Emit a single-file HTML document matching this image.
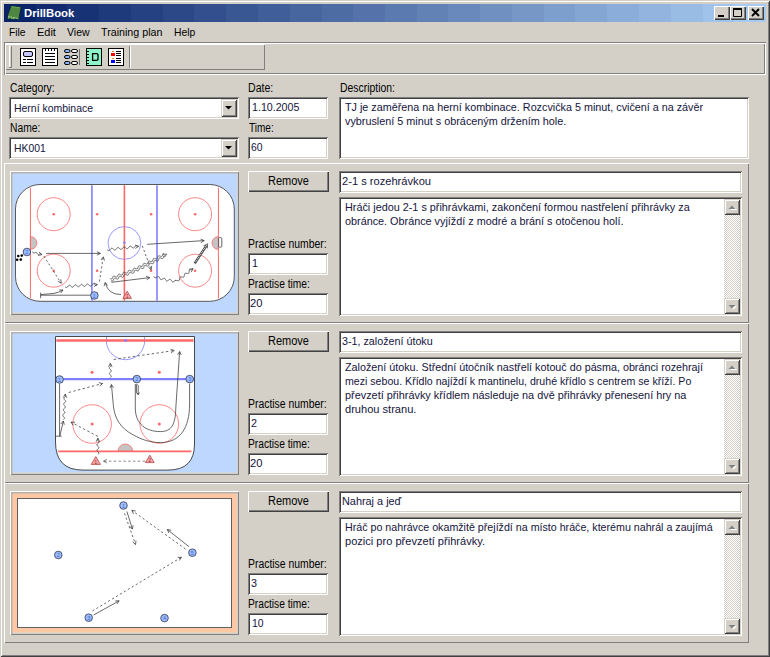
<!DOCTYPE html>
<html><head><meta charset="utf-8"><title>DrillBook</title>
<style>
*{box-sizing:border-box;margin:0;padding:0}
html,body{width:770px;height:657px;overflow:hidden;background:#D4D0C8}
body{font-family:"Liberation Sans",sans-serif;font-size:11px;color:#000;position:relative}
.abs{position:absolute}
#win{position:absolute;left:0;top:0;width:770px;height:657px;background:#D4D0C8;
 box-shadow:inset 1px 1px 0 #D4D0C8, inset -1px -1px 0 #404040, inset 2px 2px 0 #fff, inset -2px -2px 0 #808080}
#title{left:4px;top:4px;width:762px;height:18px;background:linear-gradient(to right,#0a246a 0.00%, #0a246a 4.17%,#112b70 4.17%, #112b70 8.33%,#183276 8.33%, #183276 12.50%,#1e3a7b 12.50%, #1e3a7b 16.67%,#254181 16.67%, #254181 20.83%,#2c4887 20.83%, #2c4887 25.00%,#334f8d 25.00%, #334f8d 29.17%,#395793 29.17%, #395793 33.33%,#405e99 33.33%, #405e99 37.50%,#47659e 37.50%, #47659e 41.67%,#4e6ca4 41.67%, #4e6ca4 45.83%,#5573aa 45.83%, #5573aa 50.00%,#5b7bb0 50.00%, #5b7bb0 54.17%,#6282b6 54.17%, #6282b6 58.33%,#6989bc 58.33%, #6989bc 62.50%,#7090c1 62.50%, #7090c1 66.67%,#7797c7 66.67%, #7797c7 70.83%,#7d9fcd 70.83%, #7d9fcd 75.00%,#84a6d3 75.00%, #84a6d3 79.17%,#8badd9 79.17%, #8badd9 83.33%,#92b4df 83.33%, #92b4df 87.50%,#98bce4 87.50%, #98bce4 91.67%,#9fc3ea 91.67%, #9fc3ea 95.83%,#a6caf0 95.83%, #a6caf0 100.00%)}
.tb{position:absolute;top:2px;width:16px;height:14px;background:#D4D0C8;box-shadow:inset 1px 1px 0 #fff, inset -1px -1px 0 #404040, inset -2px -2px 0 #808080}
.tx{position:absolute;white-space:nowrap;transform-origin:0 0;font-size:11px}
.in{color:#14143c}
.lbl{font-size:12px}
.mn{font-size:11.5px}
.sunk{position:absolute;background:#fff;box-shadow:inset 1px 1px 0 #808080, inset -1px -1px 0 #fff, inset 2px 2px 0 #404040, inset -2px -2px 0 #D4D0C8}
.btn{position:absolute;background:#D4D0C8;box-shadow:inset 1px 1px 0 #fff, inset -1px -1px 0 #404040, inset -2px -2px 0 #808080}
.panel{position:absolute;left:4px;width:745px;height:160px;box-shadow:inset 1px 1px 0 #fff, inset -1px -1px 0 #808080}
.imgf{position:absolute;left:6px;top:8px;width:229px;height:144px;box-shadow:inset 1px 1px 0 #fff, inset -1px -1px 0 #808080, inset 2px 2px 0 #b4b0a8, inset -2px -2px 0 #D4D0C8}
.imgf svg{position:absolute;left:2px;top:2px}
.sb{position:absolute;right:2px;top:2px;bottom:2px;width:16px;background-color:#fff;
 background-image:linear-gradient(45deg,#D4D0C8 25%,transparent 25%,transparent 75%,#D4D0C8 75%),linear-gradient(45deg,#D4D0C8 25%,transparent 25%,transparent 75%,#D4D0C8 75%);background-size:2px 2px;background-position:0 0,1px 1px}
.sb .b{position:absolute;left:0;width:16px;height:16px;background:#D4D0C8;box-shadow:inset 1px 1px 0 #D4D0C8, inset -1px -1px 0 #404040, inset 2px 2px 0 #fff, inset -2px -2px 0 #808080}
.cb{position:absolute;right:2px;top:2px;width:16px;height:18px;background:#D4D0C8;box-shadow:inset 1px 1px 0 #D4D0C8, inset -1px -1px 0 #404040, inset 2px 2px 0 #fff, inset -2px -2px 0 #808080}
</style></head><body>
<div id="win">
<div id="title" class="abs"><div class="tb" style="left:710px"><svg width="16" height="14" style="position:absolute;left:0;top:0"><rect x="4" y="9" width="6" height="2" fill="#000"/></svg></div><div class="tb" style="left:726px"><svg width="16" height="14" style="position:absolute;left:0;top:0"><path d="M3.5 3v7.5h8V3z M3.5 3.5h8" fill="none" stroke="#000" stroke-width="1"/><rect x="3" y="2" width="9" height="2" fill="#000"/></svg></div><div class="tb" style="left:744px"><svg width="16" height="14" style="position:absolute;left:0;top:0"><path d="M4 3l7 7M11 3l-7 7" stroke="#000" stroke-width="1.9" fill="none"/></svg></div></div>
<svg class="abs" style="left:4px;top:4px" width="20" height="18" viewBox="4 4 20 18"><path d="M11 5.8L21.2 7L18.7 19.9L15.8 18.6L13 19.7L10 18.4L7.3 19.3L7.5 15.6z" fill="#4f8642" stroke="#0a1a3a" stroke-width="0.8"/><path d="M8 16.6L12.5 17.2L18 18.6" stroke="#d8e8d0" stroke-width="0.7" fill="none" stroke-dasharray="1.5 1"/><path d="M7.8 18.2L10 17.6L13 18.8L15.8 17.8L18.4 19" stroke="#6fbf5a" stroke-width="1" fill="none"/><path d="M11.3 6.6L20 7.7" stroke="#66b356" stroke-width="0.8"/></svg>
<div class="tx ttl" style="left:24.0px;top:6.899999999999999px;line-height:13px;transform:scaleX(0.9839);color:#fff;font-weight:bold;font-size:11.5px;">DrillBook</div>
<div class="tx mn" style="left:9.0px;top:25.799999999999997px;line-height:13px;transform:scaleX(0.8958);">File</div>
<div class="tx mn" style="left:37.0px;top:25.799999999999997px;line-height:13px;transform:scaleX(0.9532);">Edit</div>
<div class="tx mn" style="left:67.1px;top:25.799999999999997px;line-height:13px;transform:scaleX(0.9143);">View</div>
<div class="tx mn" style="left:101.1px;top:25.799999999999997px;line-height:13px;transform:scaleX(0.9309);">Training plan</div>
<div class="tx mn" style="left:173.8px;top:25.799999999999997px;line-height:13px;transform:scaleX(0.9004);">Help</div>
<div class="abs" style="left:4px;top:42px;width:762px;height:33px;box-shadow:inset 1px 1px 0 #808080, inset -1px -1px 0 #fff, inset 2px 2px 0 #fff, inset -2px -2px 0 #808080"></div>
<div class="abs" id="toolbar" style="left:5px;top:44px;width:260px;height:26px;box-shadow:inset 1px 1px 0 #fff, inset -1px -1px 0 #808080"><svg width="260" height="26" viewBox="5 44 260 26" style="position:absolute;left:0;top:0" shape-rendering="crispEdges">
<!-- gripper -->
<rect x="9" y="46" width="1" height="22" fill="#fff"/><rect x="10" y="46" width="1" height="1" fill="#fff"/><rect x="11" y="46" width="1" height="22" fill="#808080"/><rect x="9" y="67" width="3" height="1" fill="#808080"/>
<!-- icon1 -->
<rect x="20.5" y="48.5" width="15" height="17" fill="#fff" stroke="#000"/>
<rect x="23.5" y="51.5" width="9" height="5" rx="1.5" fill="#c8c8ff" stroke="#000" shape-rendering="auto"/>
<rect x="23" y="59" width="3" height="1" fill="#000"/><rect x="27" y="59" width="6" height="1" fill="#000"/>
<rect x="23" y="62" width="3" height="1" fill="#000"/><rect x="27" y="62" width="6" height="1" fill="#000"/>
<!-- icon2 -->
<rect x="42.5" y="48.5" width="15" height="17" fill="#fff" stroke="#000"/>
<rect x="45" y="48" width="1" height="3" fill="#000"/><rect x="48" y="48" width="1" height="3" fill="#000"/><rect x="51" y="48" width="1" height="3" fill="#000"/><rect x="54" y="48" width="1" height="3" fill="#000"/>
<rect x="45" y="53" width="10" height="1" fill="#000"/><rect x="45" y="56" width="10" height="1" fill="#000"/><rect x="45" y="59" width="10" height="1" fill="#000"/><rect x="45" y="62" width="10" height="1" fill="#000"/>
<!-- icon3 -->
<g shape-rendering="auto" stroke="#000" stroke-width="1">
<rect x="64.5" y="49.5" width="5.5" height="3" rx="1.5" fill="#8cb4ff"/><rect x="71.5" y="49.5" width="6" height="3" rx="1.5" fill="#fff"/>
<rect x="64.5" y="55.5" width="5.5" height="3" rx="1.5" fill="#8cb4ff"/><rect x="71.5" y="55.5" width="6" height="3" rx="1.5" fill="#fff"/>
<rect x="64.5" y="61.5" width="5.5" height="3" rx="1.5" fill="#8cb4ff"/><rect x="71.5" y="61.5" width="6" height="3" rx="1.5" fill="#fff"/>
</g>
<rect x="79" y="49" width="1" height="16" fill="#707070"/>
<!-- icon4 -->
<rect x="86.5" y="48.5" width="15" height="17" fill="#8ef5cb" stroke="#000"/>
<rect x="101" y="48" width="1" height="18" fill="#000"/><rect x="86" y="65" width="16" height="1" fill="#000"/>
<rect x="86" y="51" width="3" height="1" fill="#000"/><rect x="86" y="54" width="3" height="1" fill="#000"/><rect x="86" y="57" width="3" height="1" fill="#000"/><rect x="86" y="60" width="3" height="1" fill="#000"/><rect x="86" y="63" width="3" height="1" fill="#000"/>
<path d="M92.6 53.6h4.4l1 1v4.8l-1 1h-4.4z" fill="none" stroke="#000" stroke-width="1.3" shape-rendering="auto"/>
<!-- icon5 -->
<rect x="108.5" y="48.5" width="15" height="17" fill="#fff" stroke="#000"/>
<rect x="112" y="51" width="2" height="1" fill="#e08020"/><rect x="111" y="53" width="4" height="3" fill="#f00"/>
<rect x="112" y="58" width="2" height="1" fill="#e08020"/><rect x="111" y="60" width="4" height="3" fill="#00f"/>
<rect x="116" y="51" width="5" height="1" fill="#000"/><rect x="116" y="53" width="5" height="1" fill="#000"/><rect x="116" y="55" width="5" height="1" fill="#000"/>
<rect x="116" y="58" width="5" height="1" fill="#000"/><rect x="116" y="60" width="5" height="1" fill="#000"/><rect x="116" y="62" width="5" height="1" fill="#000"/>
<!-- separator -->
<rect x="129" y="46" width="1" height="22" fill="#808080"/><rect x="130" y="46" width="1" height="22" fill="#fff"/>
</svg>
</div>
<div class="tx lbl" style="left:10.0px;top:81.8px;line-height:13px;transform:scaleX(0.8572);">Category:</div>
<div class="sunk" style="left:9px;top:97px;width:230px;height:22px"><div class="cb"><svg width="16" height="18" style="position:absolute;left:0;top:0"><path d="M4 7h7L7.5 10.5z" fill="#000"/></svg></div></div>
<div class="tx in" style="left:13.7px;top:101.6px;line-height:13px;transform:scaleX(0.9500);">Herní kombinace</div>
<div class="tx lbl" style="left:10.0px;top:121.80000000000001px;line-height:13px;transform:scaleX(0.8573);">Name:</div>
<div class="sunk" style="left:9px;top:137px;width:230px;height:22px"><div class="cb"><svg width="16" height="18" style="position:absolute;left:0;top:0"><path d="M4 7h7L7.5 10.5z" fill="#000"/></svg></div></div>
<div class="tx in" style="left:13.6px;top:141.6px;line-height:13px;transform:scaleX(0.9423);">HK001</div>
<div class="tx lbl" style="left:248.1px;top:81.8px;line-height:13px;transform:scaleX(0.8819);">Date:</div>
<div class="sunk" style="left:248px;top:97px;width:80px;height:22px"></div>
<div class="tx in" style="left:251.6px;top:100.6px;line-height:13px;transform:scaleX(0.9686);">1.10.2005</div>
<div class="tx lbl" style="left:248.7px;top:121.80000000000001px;line-height:13px;transform:scaleX(0.8355);">Time:</div>
<div class="sunk" style="left:248px;top:137px;width:80px;height:22px"></div>
<div class="tx in" style="left:250.8px;top:140.6px;line-height:13px;transform:scaleX(0.9388);">60</div>
<div class="tx lbl" style="left:339.6px;top:81.8px;line-height:13px;transform:scaleX(0.8681);">Description:</div>
<div class="sunk" style="left:339px;top:97px;width:410px;height:62px"></div>
<div class="tx in" style="left:344.6px;top:101.4px;line-height:13px;transform:scaleX(0.9794);">TJ je zaměřena na herní kombinace. Rozcvička 5 minut, cvičení a na závěr</div>
<div class="tx in" style="left:344.6px;top:115.4px;line-height:13px;transform:scaleX(0.9836);">vybruslení 5 minut s obráceným držením hole.</div>
<div class="panel" style="top:163px"><div class="imgf"><svg width="225" height="140" viewBox="12 173 225 140"><rect x="12" y="173" width="225" height="140" fill="#b8b4ac"/><rect x="13" y="174" width="224" height="139" fill="#dad7d0"/><rect x="12.5" y="173.5" width="224.2" height="138.9" fill="#bdd7ff"/><rect x="15.5" y="184.5" width="218.8" height="116.8" rx="24.5" fill="#fff" stroke="#585858" stroke-width="1"/><circle cx="53.7" cy="214.2" r="16.5" fill="none" stroke="#ff6868" stroke-width="0.8"/><circle cx="53.7" cy="214.2" r="1.3" fill="#ff6868"/><circle cx="53.7" cy="270.7" r="16.5" fill="none" stroke="#ff6868" stroke-width="0.8"/><circle cx="53.7" cy="270.7" r="1.3" fill="#ff6868"/><circle cx="195.1" cy="214.2" r="16.5" fill="none" stroke="#ff6868" stroke-width="0.8"/><circle cx="195.1" cy="214.2" r="1.3" fill="#ff6868"/><circle cx="195.1" cy="270.7" r="16.5" fill="none" stroke="#ff6868" stroke-width="0.8"/><circle cx="195.1" cy="270.7" r="1.3" fill="#ff6868"/><circle cx="97.1" cy="214.2" r="1.3" fill="#ff6868"/><circle cx="97.1" cy="270.7" r="1.3" fill="#ff6868"/><circle cx="151.1" cy="214.2" r="1.3" fill="#ff6868"/><circle cx="151.1" cy="270.7" r="1.3" fill="#ff6868"/><circle cx="124.4" cy="243" r="16.4" fill="none" stroke="#8080ff" stroke-width="0.8"/><path d="M30.4 236.6A6.4 6.4 0 0 1 30.4 249.4z" fill="#c4c4c4" stroke="#ff6868" stroke-width="0.8"/><path d="M218.4 236.6A6.4 6.4 0 0 0 218.4 249.4z" fill="#c4c4c4" stroke="#ff6868" stroke-width="0.8"/><path d="M30.4 187.6V298.4M218.4 187.6V298.4" stroke="#ff6868" stroke-width="1"/><path d="M91.9 185.2V300.8M157 185.2V300.8" stroke="#8080ff" stroke-width="1.6"/><path d="M124.4 185.2V300.8" stroke="#ff6868" stroke-width="1.6"/><circle cx="124.4" cy="242.8" r="1.2" fill="#8080ff"/><rect x="218.6" y="237.6" width="3.2" height="9.6" rx="1" fill="#fff" stroke="#404040" stroke-width="0.8"/><circle cx="18.3" cy="256" r="1.3" fill="#000"/><circle cx="21.8" cy="255.6" r="1.3" fill="#000"/><circle cx="17.2" cy="259.8" r="1.3" fill="#000"/><circle cx="20.8" cy="259.6" r="1.3" fill="#000"/><circle cx="26.9" cy="252" r="3.8" fill="#9cbcff" stroke="#303850" stroke-width="0.8"/><text x="26.9" y="254" font-size="5.5" text-anchor="middle" fill="#4468c0" font-family="Liberation Sans, sans-serif">2</text><path d="M32.6 251.6L32.76 252.03L32.95 252.42L33.17 252.71L33.46 252.88L33.8 252.94L34.19 252.88L34.62 252.75L35.05 252.6L35.48 252.46L35.88 252.39L36.23 252.43L36.38 252.5L36.67 252.72L36.93 253.05L37.18 253.43L37.43 253.83L37.69 254.17L37.97 254.42L38.28 254.55L38.62 254.55L38.99 254.42L39.38 254.19L39.76 254L40.13 253.88L40.47 253.87L40.79 253.96L41.09 254.12L41.39 254.31L41.69 254.48L42 254.6" fill="none" stroke="#383838" stroke-width="0.75"/><path d="M39.02 252.09L42 254.6L38.21 255.53" fill="none" stroke="#383838" stroke-width="0.75"/><path d="M46.2 253.4L100.4 253.4" fill="none" stroke="#383838" stroke-width="0.75"/><path d="M96.93 251.63L100.4 253.4L96.93 255.17" fill="none" stroke="#383838" stroke-width="0.75"/><path d="M43.9 256.2L61.2 283.2" fill="none" stroke="#383838" stroke-width="0.75" stroke-dasharray="2.2 2.2"/><path d="M60.82 279.32L61.2 283.2L57.83 281.23" fill="none" stroke="#383838" stroke-width="0.75"/><path d="M65 286.6L65.54 287.12L66.08 287.49L66.59 287.6L67.09 287.4L67.56 286.94L68.03 286.35L68.5 285.77L68.98 285.35L69.48 285.2L70 285.36L70.54 285.76L71.08 286.29L71.62 286.8L72.15 287.13L72.66 287.18L73.16 286.94L73.63 286.45L74.1 285.84L74.57 285.28L75.05 284.9L75.56 284.81L76.08 285.01L76.62 285.45L77.16 285.99L77.7 286.47L78.23 286.76L78.74 286.76L79.22 286.47L79.7 285.95L80.17 285.34L80.65 284.81L81.14 284.48L81.64 284.44L82.16 284.69L82.7 285.16L83.24 285.71L83.77 286.18L84.3 286.42L84.8 286.38L85.29 286.04L85.77 285.5L86.24 284.9L86.72 284.39L87.21 284.1L87.72 284.12L88.24 284.42L88.78 284.91L89.32 285.46L89.85 285.89L90.37 286.09L90.88 286L91.36 285.62L91.84 285.05L92.31 284.46L92.79 283.98L93.29 283.74L93.8 283.81L94.33 284.15L94.86 284.67L95.39 285.04L95.91 285.15L96.41 285.03L96.9 284.79L97.4 284.6" fill="none" stroke="#383838" stroke-width="0.75"/><path d="M93.83 283.03L97.4 284.6L94.03 286.57" fill="none" stroke="#383838" stroke-width="0.75"/><path d="M40.6 292.6V298.2M40.6 295.2H90.6" stroke="#383838" stroke-width="0.75" fill="none"/><path d="M41 294.6L54 293.4Q58 292.8 63 290" stroke="#383838" stroke-width="0.75" fill="none"/><path d="M59.1 289.97L63 290L60.68 293.14" fill="none" stroke="#383838" stroke-width="0.75"/><circle cx="94.4" cy="295.5" r="3.8" fill="#9cbcff" stroke="#303850" stroke-width="0.8"/><text x="94.4" y="297.5" font-size="5.5" text-anchor="middle" fill="#4468c0" font-family="Liberation Sans, sans-serif">1</text><path d="M99.4 281.6L103.3 256.8" fill="none" stroke="#383838" stroke-width="0.75" stroke-dasharray="2.2 2.2"/><path d="M101.01 259.96L103.3 256.8L104.51 260.51" fill="none" stroke="#383838" stroke-width="0.75"/><path d="M121 294.6Q108 294.5 105.4 283" stroke="#383838" stroke-width="0.75" fill="none"/><path d="M104.05 286.13L105.2 282.4L107.54 285.52" fill="none" stroke="#383838" stroke-width="0.75"/><path d="M122.9 298.4L131.5 298.4L127.2 291.2z" fill="#f4a8a8" stroke="#a83030" stroke-width="0.7"/><text x="127.2" y="297.6" font-size="4.5" text-anchor="middle" fill="#a02020" font-family="Liberation Sans, sans-serif">1</text><path d="M107.2 249.8L107.76 250.28L108.3 250.62L108.81 250.73L109.3 250.56L109.76 250.15L110.2 249.58L110.64 248.98L111.09 248.5L111.57 248.23L112.08 248.24L112.61 248.51L113.16 248.95L113.72 249.45L114.27 249.85L114.79 250.06L115.29 249.99L115.76 249.66L116.21 249.13L116.65 248.52L117.09 247.98L117.56 247.63L118.05 247.54L118.58 247.72L119.12 248.11L119.68 248.6L120.23 249.06L120.77 249.35L121.28 249.38L121.76 249.14L122.21 248.67L122.65 248.07L123.09 247.49L123.54 247.06L124.03 246.86L124.54 246.94L125.08 247.27L125.64 247.73L126.2 248.21L126.75 248.57L127.26 248.7L127.75 248.55L128.21 248.16L128.65 247.59L129.09 246.99L129.54 246.48L130.01 246.19L130.51 246.18L131.04 246.42L131.6 246.85L132.16 247.34L132.71 247.76L133.24 247.98L133.74 247.93L134.21 247.62L134.65 247.1L135.09 246.5L135.53 245.94L136.01 245.73L136.52 245.8L137.06 246.03L137.59 246.27L138.1 246.37L138.6 246.3" fill="none" stroke="#383838" stroke-width="0.75"/><path d="M134.95 244.94L138.6 246.3L135.35 248.45" fill="none" stroke="#383838" stroke-width="0.75"/><path d="M142.3 245.8L151.2 269.8" fill="none" stroke="#383838" stroke-width="0.75" stroke-dasharray="2.2 2.2"/><path d="M151.65 265.93L151.2 269.8L148.33 267.16" fill="none" stroke="#383838" stroke-width="0.75"/><path d="M147.1 244.3L204.2 240.6" fill="none" stroke="#383838" stroke-width="0.75"/><path d="M200.62 239.06L204.2 240.6L200.85 242.59" fill="none" stroke="#383838" stroke-width="0.75"/><path d="M110.97 280.65L111.64 280.98L112.24 281.14L112.73 281.03L113.12 280.63L113.42 280L113.68 279.3L113.98 278.68L114.37 278.29L114.87 278.19L115.48 278.37L116.14 278.7L116.8 279.02L117.4 279.18L117.89 279.06L118.27 278.64L118.56 278.01L118.83 277.3L119.14 276.69L119.53 276.31L120.04 276.23L120.64 276.41L121.31 276.75L121.97 277.07L122.56 277.21L123.05 277.08L123.42 276.65L123.71 276.01L123.98 275.3L124.29 274.7L124.69 274.33L125.2 274.27L125.81 274.46L126.48 274.8L127.13 275.11L127.72 275.25L128.2 275.1L128.57 274.66L128.86 274.01L129.13 273.31L129.44 272.71L129.84 272.36L130.36 272.31L130.98 272.51L131.64 272.85L132.3 273.16L132.88 273.28L133.36 273.12L133.72 272.67L134.01 272.01L134.23 271.28L134.49 270.67L134.87 270.3L135.39 270.22L136.02 270.38L136.72 270.66L137.4 270.91L137.98 270.97L138.44 270.75L138.76 270.26L138.98 269.58L139.19 268.85L139.46 268.25L139.84 267.89L140.36 267.82L141 267.99L141.7 268.28L142.38 268.52L142.96 268.56L143.4 268.34L143.72 267.83L143.94 267.14L144.15 266.42L144.42 265.83L144.81 265.48L145.34 265.42L145.98 265.6L146.68 265.89L147.35 266.12L147.93 266.16L148.37 265.92L148.68 265.4L148.9 264.71L149.11 263.99L149.39 263.41L149.78 263.07L150.29 263.03L150.94 263.2L151.65 263.46L152.33 263.67L152.9 263.67L153.32 263.4L153.61 262.87L153.8 262.16L153.99 261.44L154.25 260.86L154.64 260.52L155.18 260.47L155.84 260.64L156.55 260.91L157.22 261.11L157.78 261.1L158.2 260.82L158.48 260.27L158.68 259.56L158.86 258.84L159.13 258.27L159.53 257.95L160.07 257.91L160.73 258.09L161.44 258.35L162.11 258.54L162.67 258.53L163.08 258.23L163.36 257.67L163.55 256.96L163.74 256.25L164.01 255.68L164.87 256.25" fill="none" stroke="#303030" stroke-width="0.7"/><path d="M110.03 278.55L110.69 278.88L111.29 279.04L111.79 278.94L112.17 278.53L112.47 277.91L112.73 277.2L113.03 276.58L113.42 276.19L113.92 276.1L114.53 276.27L115.19 276.6L115.85 276.93L116.45 277.08L116.94 276.96L117.32 276.54L117.62 275.91L117.88 275.2L118.19 274.59L118.58 274.21L119.09 274.13L119.7 274.32L120.36 274.65L121.02 274.97L121.61 275.12L122.1 274.98L122.47 274.55L122.77 273.91L123.03 273.21L123.34 272.6L123.74 272.24L124.25 272.17L124.86 272.37L125.53 272.7L126.19 273.02L126.77 273.15L127.26 273L127.62 272.56L127.91 271.92L128.18 271.21L128.49 270.61L128.89 270.26L129.41 270.21L130.03 270.42L130.7 270.76L131.35 271.06L131.94 271.19L132.41 271.02L132.78 270.57L133.06 269.92L133.28 269.19L133.55 268.58L133.92 268.21L134.44 268.12L135.08 268.28L135.77 268.57L136.45 268.81L137.04 268.87L137.49 268.66L137.81 268.16L138.04 267.48L138.24 266.76L138.51 266.16L138.89 265.8L139.42 265.72L140.06 265.89L140.75 266.18L141.43 266.42L142.01 266.47L142.46 266.24L142.77 265.74L142.99 265.05L143.2 264.33L143.47 263.73L143.86 263.39L144.39 263.33L145.04 263.51L145.73 263.79L146.41 264.03L146.98 264.07L147.42 263.82L147.73 263.31L147.95 262.62L148.16 261.9L148.44 261.31L148.83 260.98L149.34 260.94L149.99 261.1L150.7 261.37L151.38 261.57L151.95 261.58L152.37 261.31L152.66 260.77L152.85 260.07L153.04 259.35L153.3 258.76L153.69 258.43L154.23 258.37L154.89 258.55L155.6 258.81L156.27 259.01L156.84 259.01L157.25 258.72L157.53 258.18L157.73 257.47L157.92 256.75L158.18 256.17L158.58 255.85L159.12 255.81L159.79 255.99L160.49 256.26L161.16 256.45L161.72 256.43L162.13 256.13L162.41 255.58L162.6 254.87L162.79 254.15L163.06 253.58L163.93 254.15" fill="none" stroke="#303030" stroke-width="0.7"/><path d="M162.78 254.19L166.68 254.17L164.41 257.34" fill="none" stroke="#303030" stroke-width="0.7"/><path d="M111.4 282.3L149.8 277.6" fill="none" stroke="#383838" stroke-width="0.75"/><path d="M146.14 276.26L149.8 277.6L146.57 279.78" fill="none" stroke="#383838" stroke-width="0.75"/><path d="M154 276.4L154.33 277.07L154.7 277.6L155.15 277.88L155.67 277.87L156.27 277.61L156.91 277.22L157.55 276.83L158.15 276.59L158.67 276.61L159.1 276.92L159.47 277.47L159.79 278.15L160.13 278.81L160.51 279.32L160.96 279.57L161.5 279.53L162.1 279.25L162.74 278.85L163.38 278.47L163.97 278.26L164.48 278.31L164.9 278.64L165.22 279.18L165.62 279.82L166.03 280.43L166.47 280.87L166.96 281.03L167.49 280.89L168.06 280.52L168.65 280.04L169.24 279.6L169.79 279.35L170.3 279.37L170.76 279.68L171.18 280.22L171.59 280.86L172 281.46L172.44 281.87L172.93 281.99L173.47 281.83L174.05 281.45L174.64 280.96L175.22 280.54L175.77 280.3L175.44 280.48L176 280.39L176.69 280.48L177.44 280.64L178.15 280.75L178.73 280.69L179.15 280.41L179.39 279.89L179.5 279.19L179.57 278.43L179.68 277.73L179.91 277.2L180.32 276.9L180.9 276.83L181.6 276.93L182.34 277.09L183.04 277.19L183.61 277.11L184.01 276.8L184.24 276.26L184.34 275.55L184.39 274.78L184.5 274.09L184.74 273.58L185.16 273.3L185.75 273.24L186.46 273.34L187.21 273.49L187.9 273.56L188.45 273.45L188.83 273.1L189.03 272.54L189.11 271.82L189.16 271.05L189.28 270.38L189.54 269.89L189.98 269.63L190.65 269.68L191.34 269.75L191.93 269.69L192.38 269.45L192.71 269.05L193 268.6" fill="none" stroke="#383838" stroke-width="0.75"/><path d="M189.17 269.31L193 268.6L191.32 272.12" fill="none" stroke="#383838" stroke-width="0.75"/><path d="M194.6 263.7L206.4 245.6" stroke="#383838" stroke-width="2.4"/><path d="M194.6 263.7L206.4 245.6" stroke="#fff" stroke-width="1.1" stroke-dasharray="0.9 0.9"/><path d="M203.5 245.88L207.6 243.8L207.35 248.39" fill="none" stroke="#383838" stroke-width="0.75"/></svg></div></div>
<div class="btn" style="left:248px;top:171px;width:81px;height:21px"></div>
<div class="tx lbl" style="left:267.7px;top:174.6px;line-height:13px;transform:scaleX(0.9175);">Remove</div>
<div class="sunk" style="left:339px;top:171px;width:403px;height:22px"></div>
<div class="tx in" style="left:341.8px;top:175.4px;line-height:13px;transform:scaleX(1.0108);">2-1 s rozehrávkou</div>
<div class="sunk" style="left:339px;top:197px;width:403px;height:119px"><div class="sb"><div class="b" style="top:0"><svg width="16" height="16" style="position:absolute;left:0;top:0"><path d="M5 10h7L8.5 6.5z" fill="#fff" transform="translate(1,1)"/><path d="M4.5 10h7L8 6.5z" fill="#808080"/></svg></div><div class="b" style="bottom:0"><svg width="16" height="16" style="position:absolute;left:0;top:0"><path d="M5 7h7L8.5 10.5z" fill="#fff" transform="translate(1,1)"/><path d="M4.5 7h7L8 10.5z" fill="#808080"/></svg></div></div></div>
<div class="tx in" style="left:344.7px;top:200.6px;line-height:13px;transform:scaleX(0.9839);">Hráči jedou 2-1 s přihrávkami, zakončení formou nastřelení přihrávky za</div>
<div class="tx in" style="left:344.7px;top:214.6px;line-height:13px;transform:scaleX(0.9837);">obránce. Obránce vyjíždí z modré a brání s otočenou holí.</div>
<div class="tx lbl" style="left:248.1px;top:237.6px;line-height:13px;transform:scaleX(0.8666);">Practise number:</div>
<div class="sunk" style="left:248px;top:253px;width:80px;height:22px"></div>
<div class="tx in" style="left:251.7px;top:257.0px;line-height:13px;transform:scaleX(0.9796);">1</div>
<div class="tx lbl" style="left:248.1px;top:277.7px;line-height:13px;transform:scaleX(0.8502);">Practise time:</div>
<div class="sunk" style="left:248px;top:293px;width:80px;height:22px"></div>
<div class="tx in" style="left:250.4px;top:296.8px;line-height:13px;transform:scaleX(1.0122);">20</div>
<div class="panel" style="top:323px"><div class="imgf"><svg width="225" height="140" viewBox="12 333 225 140"><rect x="12" y="333" width="225" height="140" fill="#b8b4ac"/><rect x="13" y="334" width="224" height="139" fill="#dad7d0"/><rect x="12.5" y="333.5" width="224.2" height="138.9" fill="#bdd7ff"/><clipPath id="rk2"><rect x="56" y="337" width="138" height="133"/></clipPath><path d="M55.5 336.5H194.5V444Q194.5 470.1 168 470.1H83Q55.5 470.1 55.5 442z" fill="#fff" stroke="#484848" stroke-width="1"/><circle cx="125.5" cy="340.5" r="19.2" fill="none" stroke="#8080ff" stroke-width="0.8" clip-path="url(#rk2)"/><path d="M56.4 340.5H193.6" stroke="#ff6868" stroke-width="2.4"/><circle cx="125.5" cy="340.5" r="1.4" fill="#8080ff"/><circle cx="92.1" cy="372.3" r="1.5" fill="#ff6868"/><circle cx="92.1" cy="424" r="19.3" fill="none" stroke="#ff6868" stroke-width="0.8"/><circle cx="92.1" cy="424" r="1.5" fill="#ff6868"/><circle cx="159.3" cy="372.3" r="1.5" fill="#ff6868"/><circle cx="159.3" cy="424" r="19.3" fill="none" stroke="#ff6868" stroke-width="0.8"/><circle cx="159.3" cy="424" r="1.5" fill="#ff6868"/><path d="M56 379.1H194" stroke="#8080ff" stroke-width="2.2"/><path d="M117.9 451.4A7.4 7.4 0 0 1 132.7 451.4z" fill="#c4c4c4" stroke="#ff6868" stroke-width="0.8"/><path d="M58.2 451.4H191.4" stroke="#ff6868" stroke-width="1.8"/><path d="M110.3 377.8L110.81 377.32L111.18 376.84L111.3 376.36L111.13 375.88L110.73 375.4L110.21 374.92L109.71 374.44L109.38 373.96L109.31 373.48L109.52 373L109.95 372.52L110.48 372.04L110.96 371.56L111.25 371.08L111.27 370.6L111.02 370.12L110.57 369.64L110.03 369.16L109.58 368.68L109.33 368.2L109.35 367.72L109.64 367.24L110.12 366.76L110.64 366.28L110.93 365.8L110.93 365.32L110.74 364.84L110.49 364.36L110.31 363.88L110.3 363.4" fill="none" stroke="#383838" stroke-width="0.75"/><path d="M108.53 366.87L110.3 363.4L112.07 366.87" fill="none" stroke="#383838" stroke-width="0.75"/><path d="M113.7 359.5L174.3 350.5" fill="none" stroke="#383838" stroke-width="0.75" stroke-dasharray="2.4 2.4"/><path d="M170.6 349.26L174.3 350.5L171.12 352.76" fill="none" stroke="#383838" stroke-width="0.75"/><path d="M68.7 392.5L102.6 383.5" fill="none" stroke="#383838" stroke-width="0.75" stroke-dasharray="2.4 2.4"/><path d="M98.79 382.68L102.6 383.5L99.7 386.1" fill="none" stroke="#383838" stroke-width="0.75"/><path d="M59.6 384V436.2M55.8 436.2H61.8" stroke="#383838" stroke-width="0.75" fill="none"/><path d="M59.8 436L63.4 421" fill="none" stroke="#383838" stroke-width="0.75"/><path d="M60.87 423.97L63.4 421L64.31 424.79" fill="none" stroke="#383838" stroke-width="0.75"/><path d="M63.4 419.5L63.98 419.04L64.39 418.56L64.51 418.06L64.32 417.54L63.89 416.99L63.37 416.44L62.94 415.9L62.74 415.38L62.85 414.88L63.25 414.4L63.82 413.94L64.4 413.47L64.82 413L64.96 412.5L64.78 411.98L64.36 411.43L63.84 410.88L63.4 410.34L63.19 409.81L63.29 409.31L63.68 408.83L64.25 408.37L64.83 407.91L65.26 407.43L65.4 406.92L65.23 406.4L64.8 405.87L64.28 405.32L63.82 404.79L63.59 404.27L63.67 403.76L64.04 403.28L64.6 402.8L65.17 402.33L65.6 401.85L65.75 401.35L65.59 400.83L65.17 400.3L64.65 399.76L64.18 399.22L63.94 398.7L64.01 398.19L64.37 397.71L64.92 397.23L65.43 396.76L65.66 396.26L65.61 395.75L65.41 395.23L65.23 394.71L65.2 394.2" fill="none" stroke="#383838" stroke-width="0.75"/><path d="M63.22 397.56L65.2 394.2L66.75 397.78" fill="none" stroke="#383838" stroke-width="0.75"/><path d="M97.9 436.4L71 422.2" fill="none" stroke="#383838" stroke-width="0.75" stroke-dasharray="2.4 2.4"/><path d="M73.25 425.39L71 422.2L74.9 422.26" fill="none" stroke="#383838" stroke-width="0.75"/><path d="M97.9 454.6L98.44 454.09L98.81 453.58L98.89 453.06L98.65 452.55L98.16 452.04L97.6 451.53L97.13 451.01L96.91 450.5L97.01 449.99L97.39 449.48L97.94 448.96L98.48 448.45L98.83 447.94L98.88 447.43L98.62 446.91L98.12 446.4L97.56 445.89L97.1 445.38L96.9 444.86L97.02 444.35L97.43 443.84L97.98 443.32L98.51 442.81L98.84 442.3L98.87 441.79L98.59 441.27L98.05 440.76L97.64 440.25L97.48 439.74L97.56 439.22L97.75 438.71L97.9 438.2" fill="none" stroke="#383838" stroke-width="0.75"/><path d="M96.13 441.67L97.9 438.2L99.67 441.67" fill="none" stroke="#383838" stroke-width="0.75"/><path d="M91.2 464.4L100.4 464.4L95.8 456.6z" fill="#f4a8a8" stroke="#a83030" stroke-width="0.7"/><text x="95.8" y="463.6" font-size="4.5" text-anchor="middle" fill="#a02020" font-family="Liberation Sans, sans-serif">1</text><path d="M145.4 462.6L154.2 462.6L149.8 455.2z" fill="#f4a8a8" stroke="#a83030" stroke-width="0.7"/><text x="149.8" y="461.8" font-size="4.5" text-anchor="middle" fill="#a02020" font-family="Liberation Sans, sans-serif">2</text><path d="M145 461.2L103.4 461.2" fill="none" stroke="#383838" stroke-width="0.6" stroke-dasharray="2.4 2.4"/><path d="M106.87 462.97L103.4 461.2L106.87 459.43" fill="none" stroke="#383838" stroke-width="0.6"/><path d="M135.3 384V408C135.3 424 146 431.6 160.3 431.6C172 431.6 175.4 424 175.8 408L179.6 352" stroke="#383838" stroke-width="0.75" fill="none"/><path d="M177.69 354.74L179.7 351.4L181.22 354.99" fill="none" stroke="#383838" stroke-width="0.75"/><path d="M189.6 383.6V404C189.6 428 180 442.6 160.3 442.6C150 442.6 142 439.6 133.4 435C120 428 114.6 418 113.4 405.8L111.5 385" stroke="#383838" stroke-width="0.75" fill="none"/><path d="M109.95 388.02L111.4 384.4L113.47 387.7" fill="none" stroke="#383838" stroke-width="0.75"/><path d="M136.4 384.6V392.6L138.2 394.4V385.4Q137.4 384 136.4 384.8" stroke="#222" stroke-width="0.7" fill="none"/><path d="M139.5 392.55L138.2 394.8L136.75 392.64" fill="none" stroke="#383838" stroke-width="0.7"/><circle cx="59.6" cy="379.5" r="3.8" fill="#9cbcff" stroke="#303850" stroke-width="0.8"/><text x="59.6" y="381.5" font-size="5.5" text-anchor="middle" fill="#4468c0" font-family="Liberation Sans, sans-serif">1</text><circle cx="136.8" cy="379.1" r="3.8" fill="#9cbcff" stroke="#303850" stroke-width="0.8"/><text x="136.8" y="381.1" font-size="5.5" text-anchor="middle" fill="#4468c0" font-family="Liberation Sans, sans-serif">2</text><circle cx="189.7" cy="379.1" r="3.8" fill="#9cbcff" stroke="#303850" stroke-width="0.8"/><text x="189.7" y="381.1" font-size="5.5" text-anchor="middle" fill="#4468c0" font-family="Liberation Sans, sans-serif">3</text></svg></div></div>
<div class="btn" style="left:248px;top:331px;width:81px;height:21px"></div>
<div class="tx lbl" style="left:267.7px;top:334.6px;line-height:13px;transform:scaleX(0.9175);">Remove</div>
<div class="sunk" style="left:339px;top:331px;width:403px;height:22px"></div>
<div class="tx in" style="left:341.8px;top:335.4px;line-height:13px;transform:scaleX(0.9758);">3-1, založení útoku</div>
<div class="sunk" style="left:339px;top:357px;width:403px;height:119px"><div class="sb"><div class="b" style="top:0"><svg width="16" height="16" style="position:absolute;left:0;top:0"><path d="M5 10h7L8.5 6.5z" fill="#fff" transform="translate(1,1)"/><path d="M4.5 10h7L8 6.5z" fill="#808080"/></svg></div><div class="b" style="bottom:0"><svg width="16" height="16" style="position:absolute;left:0;top:0"><path d="M5 7h7L8.5 10.5z" fill="#fff" transform="translate(1,1)"/><path d="M4.5 7h7L8 10.5z" fill="#808080"/></svg></div></div></div>
<div class="tx in" style="left:344.7px;top:360.6px;line-height:13px;transform:scaleX(0.9774);">Založení útoku. Střední útočník nastřelí kotouč do pásma, obránci rozehrají</div>
<div class="tx in" style="left:344.7px;top:374.6px;line-height:13px;transform:scaleX(0.9633);">mezi sebou. Křídlo najíždí k mantinelu, druhé křídlo s centrem se kříží. Po</div>
<div class="tx in" style="left:344.7px;top:388.6px;line-height:13px;transform:scaleX(0.9883);">převzetí přihrávky křídlem následuje na dvě přihrávky přenesení hry na</div>
<div class="tx in" style="left:344.7px;top:402.6px;line-height:13px;transform:scaleX(1.0065);">druhou stranu.</div>
<div class="tx lbl" style="left:248.1px;top:397.6px;line-height:13px;transform:scaleX(0.8666);">Practise number:</div>
<div class="sunk" style="left:248px;top:413px;width:80px;height:22px"></div>
<div class="tx in" style="left:251.3px;top:417.0px;line-height:13px;transform:scaleX(0.9796);">2</div>
<div class="tx lbl" style="left:248.1px;top:437.7px;line-height:13px;transform:scaleX(0.8502);">Practise time:</div>
<div class="sunk" style="left:248px;top:453px;width:80px;height:22px"></div>
<div class="tx in" style="left:250.4px;top:456.8px;line-height:13px;transform:scaleX(1.0122);">20</div>
<div class="panel" style="top:483px"><div class="imgf"><svg width="225" height="140" viewBox="12 493 225 140"><rect x="12" y="493" width="225" height="140" fill="#b8b4ac"/><rect x="13" y="494" width="224" height="139" fill="#dad7d0"/><rect x="12.5" y="493.5" width="224.2" height="138.9" fill="#ffc8a4"/><rect x="17.5" y="498.5" width="214" height="129" fill="#fff" stroke="#606060" stroke-width="1"/><path d="M126.9 511.5L132.4 529.1" fill="none" stroke="#383838" stroke-width="0.75"/><path d="M133.05 525.26L132.4 529.1L129.67 526.31" fill="none" stroke="#383838" stroke-width="0.75"/><path d="M124.5 513.3L135.5 544.5" fill="none" stroke="#383838" stroke-width="0.75" stroke-dasharray="2.2 2.4"/><path d="M136.01 540.63L135.5 544.5L132.67 541.81" fill="none" stroke="#383838" stroke-width="0.75"/><path d="M185.5 549L131.8 510.4" fill="none" stroke="#383838" stroke-width="0.75" stroke-dasharray="2.2 2.4"/><path d="M133.59 513.87L131.8 510.4L135.66 510.99" fill="none" stroke="#383838" stroke-width="0.75"/><path d="M189 546.7L167.3 529.5" fill="none" stroke="#383838" stroke-width="0.75"/><path d="M168.92 533.05L167.3 529.5L171.12 530.27" fill="none" stroke="#383838" stroke-width="0.75"/><path d="M92.4 611L181.5 557.2" fill="none" stroke="#383838" stroke-width="0.75" stroke-dasharray="2.2 2.4"/><path d="M177.61 557.48L181.5 557.2L179.44 560.51" fill="none" stroke="#383838" stroke-width="0.75"/><path d="M93.6 615L119.1 600.8" fill="none" stroke="#383838" stroke-width="0.75"/><path d="M115.2 600.94L119.1 600.8L116.93 604.04" fill="none" stroke="#383838" stroke-width="0.75"/><circle cx="123.5" cy="505.5" r="3.8" fill="#9cbcff" stroke="#303850" stroke-width="0.8"/><text x="123.5" y="507.5" font-size="5.5" text-anchor="middle" fill="#4468c0" font-family="Liberation Sans, sans-serif">1</text><circle cx="58.3" cy="555" r="3.8" fill="#9cbcff" stroke="#303850" stroke-width="0.8"/><text x="58.3" y="557" font-size="5.5" text-anchor="middle" fill="#4468c0" font-family="Liberation Sans, sans-serif">2</text><circle cx="88.7" cy="617.7" r="3.8" fill="#9cbcff" stroke="#303850" stroke-width="0.8"/><text x="88.7" y="619.7" font-size="5.5" text-anchor="middle" fill="#4468c0" font-family="Liberation Sans, sans-serif">3</text><circle cx="164.5" cy="618.1" r="3.8" fill="#9cbcff" stroke="#303850" stroke-width="0.8"/><text x="164.5" y="620.1" font-size="5.5" text-anchor="middle" fill="#4468c0" font-family="Liberation Sans, sans-serif">4</text><circle cx="192.4" cy="552.7" r="3.8" fill="#9cbcff" stroke="#303850" stroke-width="0.8"/><text x="192.4" y="554.7" font-size="5.5" text-anchor="middle" fill="#4468c0" font-family="Liberation Sans, sans-serif">5</text></svg></div></div>
<div class="btn" style="left:248px;top:491px;width:81px;height:21px"></div>
<div class="tx lbl" style="left:267.7px;top:494.6px;line-height:13px;transform:scaleX(0.9175);">Remove</div>
<div class="sunk" style="left:339px;top:491px;width:403px;height:22px"></div>
<div class="tx in" style="left:341.8px;top:495.4px;line-height:13px;transform:scaleX(0.9888);">Nahraj a jeď</div>
<div class="sunk" style="left:339px;top:517px;width:403px;height:119px"><div class="sb"><div class="b" style="top:0"><svg width="16" height="16" style="position:absolute;left:0;top:0"><path d="M5 10h7L8.5 6.5z" fill="#fff" transform="translate(1,1)"/><path d="M4.5 10h7L8 6.5z" fill="#808080"/></svg></div><div class="b" style="bottom:0"><svg width="16" height="16" style="position:absolute;left:0;top:0"><path d="M5 7h7L8.5 10.5z" fill="#fff" transform="translate(1,1)"/><path d="M4.5 7h7L8 10.5z" fill="#808080"/></svg></div></div></div>
<div class="tx in" style="left:344.7px;top:520.6px;line-height:13px;transform:scaleX(0.9700);">Hráč po nahrávce okamžitě přejíždí na místo hráče, kterému nahrál a zaujímá</div>
<div class="tx in" style="left:344.7px;top:534.6px;line-height:13px;transform:scaleX(1.0058);">pozici pro převzetí přihrávky.</div>
<div class="tx lbl" style="left:248.1px;top:557.6px;line-height:13px;transform:scaleX(0.8666);">Practise number:</div>
<div class="sunk" style="left:248px;top:573px;width:80px;height:22px"></div>
<div class="tx in" style="left:251.3px;top:577.0px;line-height:13px;transform:scaleX(0.9796);">3</div>
<div class="tx lbl" style="left:248.1px;top:597.7px;line-height:13px;transform:scaleX(0.8502);">Practise time:</div>
<div class="sunk" style="left:248px;top:613px;width:80px;height:22px"></div>
<div class="tx in" style="left:251.5px;top:616.8px;line-height:13px;transform:scaleX(0.9469);">10</div>
</div>
</body></html>
